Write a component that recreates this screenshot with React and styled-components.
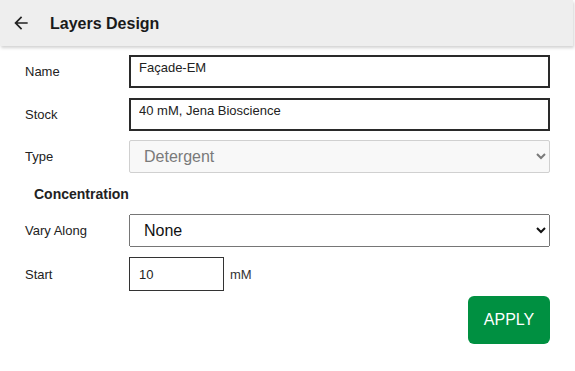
import React from "react";
import styled, { createGlobalStyle } from "styled-components";

const Global = createGlobalStyle`
  html, body { margin: 0; padding: 0; background: #fff; }
  body { font-family: "Liberation Sans", Arial, sans-serif; color: #222; }
`;

const Page = styled.div`
  width: 575px;
  height: 371px;
  overflow: hidden;
  background: #fff;
`;

const Header = styled.header`
  width: 573px;
  height: 46px;
  background: #eeeeee;
  box-shadow: 1px 2px 3px rgba(0, 0, 0, 0.18);
  display: flex;
  align-items: center;
  padding-left: 11px;
  box-sizing: border-box;
  gap: 19px;
`;

const BackButton = styled.button`
  border: 0;
  background: transparent;
  padding: 0;
  width: 20px;
  height: 20px;
  display: flex;
  align-items: center;
  justify-content: center;
  cursor: pointer;
`;

const Title = styled.h1`
  margin: 0;
  font-size: 16px;
  font-weight: bold;
  color: #1a1a1a;
  padding-top: 1px;
`;

const Form = styled.form`
  display: flex;
  flex-direction: column;
  padding: 9px 25px 0 25px;
`;

const Row = styled.div`
  display: grid;
  grid-template-columns: 104px 1fr;
  align-items: center;
  margin-top: ${(p) => p.$mt || 0}px;
`;

const Label = styled.label`
  font-size: 13px;
  color: #222;
`;

const TextBox = styled.input`
  box-sizing: border-box;
  width: 100%;
  height: 33px;
  border: 2px solid #2a2a2a;
  border-radius: 0;
  padding: 0 8px 8px 8px;
  font-family: "Liberation Sans", Arial, sans-serif;
  font-size: 13px;
  color: #222;
  outline: none;
`;

const Select = styled.select`
  box-sizing: border-box;
  width: 100%;
  height: 33px;
  font-family: "Liberation Sans", Arial, sans-serif;
  font-size: 16px;
  padding-left: 10px;
  color: #111;
  &:disabled {
    color: #7a7a7a;
    -webkit-text-fill-color: #7a7a7a;
    opacity: 1;
    background-color: #f8f8f8;
    border: 1px solid #d0d0d0;
    border-radius: 2px;
  }
  &:disabled option {
    color: #7a7a7a;
  }
`;

const SectionTitle = styled.h2`
  margin: 8px 0 0 9px;
  font-size: 14px;
  font-weight: bold;
  color: #222;
  height: 27px;
  line-height: 27px;
`;

const Inline = styled.div`
  display: flex;
  align-items: center;
  gap: 6px;
`;

const SmallBox = styled.input`
  box-sizing: border-box;
  width: 95px;
  height: 34px;
  border: 1px solid #333;
  border-radius: 0;
  padding: 0 9px;
  font-family: "Liberation Sans", Arial, sans-serif;
  font-size: 13px;
  color: #222;
  outline: none;
`;

const Unit = styled.span`
  font-size: 13px;
  color: #333;
`;

const Actions = styled.div`
  display: flex;
  justify-content: flex-end;
  margin-top: 5px;
`;

const ApplyButton = styled.button`
  width: 82px;
  height: 48px;
  border: 0;
  border-radius: 6px;
  background: #009041;
  color: #fff;
  font-family: "Liberation Sans", Arial, sans-serif;
  font-size: 16px;
  cursor: pointer;
`;

export default function App() {
  return (
    <Page>
      <Global />
      <Header>
        <BackButton type="button" aria-label="Back">
          <svg width="20" height="20" viewBox="0 0 24 24">
            <path
              d="M20 11H7.83l5.59-5.59L12 4l-8 8 8 8 1.41-1.41L7.83 13H20v-2z"
              fill="#222"
            />
          </svg>
        </BackButton>
        <Title>Layers Design</Title>
      </Header>
      <Form onSubmit={(e) => e.preventDefault()}>
        <Row>
          <Label>Name</Label>
          <TextBox defaultValue="Façade-EM" />
        </Row>
        <Row $mt={10}>
          <Label>Stock</Label>
          <TextBox defaultValue="40 mM, Jena Bioscience" />
        </Row>
        <Row $mt={9}>
          <Label>Type</Label>
          <Select disabled defaultValue="Detergent">
            <option>Detergent</option>
          </Select>
        </Row>
        <SectionTitle>Concentration</SectionTitle>
        <Row $mt={6}>
          <Label>Vary Along</Label>
          <Select defaultValue="None">
            <option>None</option>
          </Select>
        </Row>
        <Row $mt={10}>
          <Label>Start</Label>
          <Inline>
            <SmallBox defaultValue="10" />
            <Unit>mM</Unit>
          </Inline>
        </Row>
        <Actions>
          <ApplyButton type="submit">APPLY</ApplyButton>
        </Actions>
      </Form>
    </Page>
  );
}
